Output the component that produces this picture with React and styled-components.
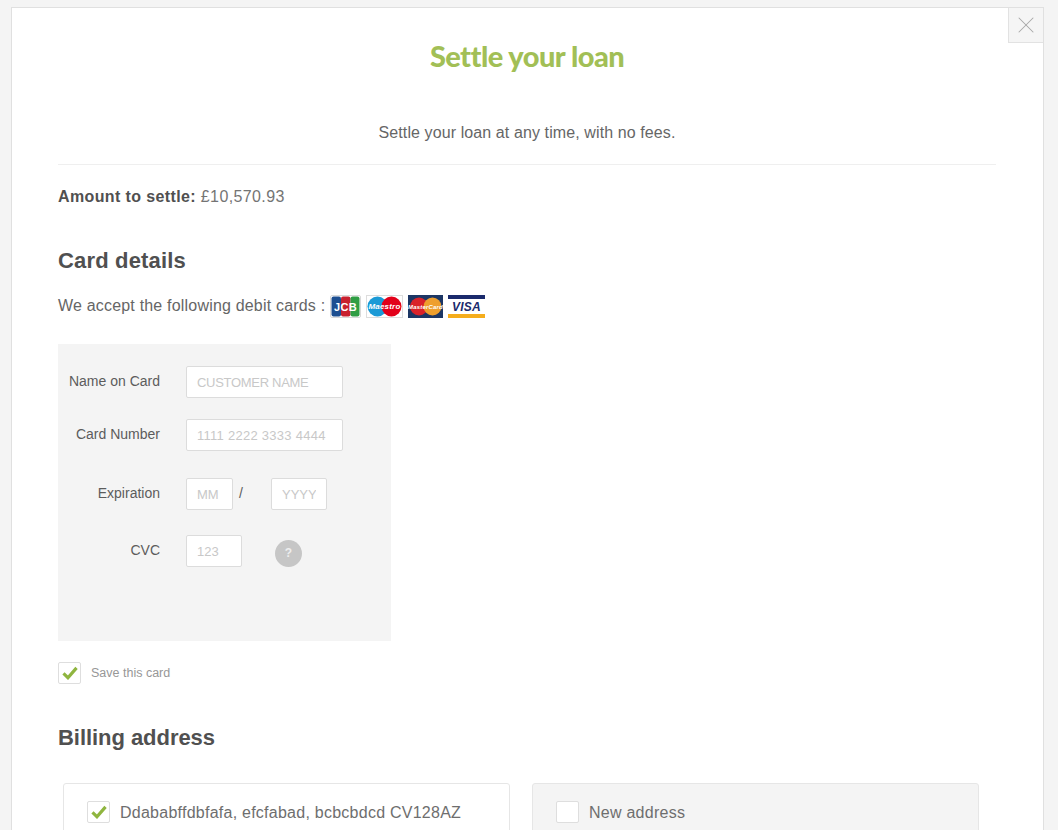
import React from 'react';
import styled, { createGlobalStyle } from 'styled-components';
import { X } from 'lucide-react';

const GlobalStyle = createGlobalStyle`
  html, body {
    margin: 0;
    padding: 0;
    height: 100%;
    overflow: hidden;
    background: #f4f4f4;
  }
  * {
    box-sizing: border-box;
  }
`;

const Page = styled.div`
  height: 830px;
  padding: 7px 14px 0 11px;
  overflow: hidden;
  font-family: 'Liberation Sans', Arial, sans-serif;
  color: #5c5c5c;
`;

const Modal = styled.div`
  position: relative;
  height: 860px;
  padding: 0 47px 0 46px;
  background: #fff;
  border: 1px solid #e0e0e0;
`;

const CloseBox = styled.button`
  position: absolute;
  top: 0;
  right: 0;
  width: 35px;
  height: 35px;
  padding: 0;
  display: flex;
  align-items: center;
  justify-content: center;
  color: #a8a8a8;
  background: #f5f5f5;
  border: none;
  border-left: 1px solid #e2e2e2;
  border-bottom: 1px solid #e2e2e2;
`;

const Title = styled.h1`
  margin: 0;
  padding-top: 30px;
  height: 87px;
  font-family: Lato, sans-serif;
  font-size: 29px;
  line-height: 36px;
  font-weight: 900;
  letter-spacing: -0.55px;
  text-align: center;
  color: #a2bf56;
`;

const Intro = styled.p`
  margin: 0;
  height: 70px;
  padding-top: 28px;
  border-bottom: 1px solid #efefef;
  font-size: 16px;
  line-height: 20px;
  letter-spacing: 0.1px;
  text-align: center;
  color: #666;
`;

const Amount = styled.p`
  margin: 0;
  padding-top: 22px;
  font-size: 16px;
  line-height: 20px;
  letter-spacing: 0.38px;
  color: #747474;
  strong {
    color: #505050;
  }
`;

const SectionTitle = styled.h2`
  margin: 0;
  padding-top: ${(p) => p.$top}px;
  font-size: 22px;
  line-height: 26px;
  font-weight: 700;
  letter-spacing: ${(p) => p.$track}px;
  color: #505050;
`;

const AcceptRow = styled.div`
  display: flex;
  align-items: center;
  height: 26px;
  margin-top: 19px;
  font-size: 16px;
  letter-spacing: 0.19px;
  color: #666;
`;

const Cards = styled.div`
  display: flex;
  gap: 5px;
  margin-left: 5px;
`;

const CardIcon = styled.svg`
  display: block;
  width: ${(p) => p.$width}px;
  height: 23px;
`;

const FormPanel = styled.div`
  width: 333px;
  height: 297px;
  margin-top: 25px;
  padding-top: 22px;
  background: #f4f4f4;
`;

const FormRow = styled.div`
  display: flex;
  align-items: center;
  height: 32px;
  margin-bottom: ${(p) => p.$gap}px;
`;

const Label = styled.label`
  flex: none;
  width: 102px;
  margin-right: 26px;
  padding-bottom: 3px;
  font-size: 14px;
  text-align: right;
  color: #5c5c5c;
`;

const Field = styled.input`
  flex: none;
  width: ${(p) => p.$width}px;
  height: 32px;
  padding: 0 10px;
  font-family: inherit;
  font-size: 13px;
  letter-spacing: ${(p) => p.$track || 0}px;
  background: #fff;
  border: 1px solid #dcdcdc;
  border-radius: 2px;
  outline: none;
  &::placeholder {
    color: #c8c8c8;
    opacity: 1;
  }
`;

const Slash = styled.span`
  width: 38px;
  padding-left: 6px;
  padding-bottom: 3px;
  font-size: 14px;
  color: #5c5c5c;
`;

const HelpDot = styled.span`
  width: 27px;
  height: 27px;
  margin-left: 33px;
  margin-top: 4px;
  display: flex;
  align-items: center;
  justify-content: center;
  border-radius: 50%;
  font-size: 12px;
  font-weight: 700;
  color: #eee;
  background: #c6c6c6;
`;

const SaveRow = styled.label`
  display: flex;
  align-items: center;
  gap: 10px;
  margin-top: 21px;
  font-size: 12.5px;
  color: #979797;
`;

const Box = styled.span`
  flex: none;
  width: 23px;
  height: 22px;
  display: flex;
  align-items: center;
  justify-content: center;
  background: #fff;
  border: 1px solid #dedede;
  border-radius: 2px;
`;

const AddressGrid = styled.div`
  display: grid;
  grid-template-columns: 447px 447px;
  column-gap: 22px;
  margin: 32px 0 0 5px;
`;

const AddressCard = styled.label`
  display: flex;
  align-items: flex-start;
  gap: 10px;
  height: 90px;
  padding: 17px 23px;
  font-size: 16px;
  line-height: 23px;
  letter-spacing: 0.25px;
  color: #6e6e6e;
  background: ${(p) => (p.$muted ? '#f4f4f4' : '#fff')};
  border: 1px solid #e6e6e6;
  border-radius: 3px;
`;

const Check = () => (
  <svg width="16" height="14" viewBox="0 0 17 15">
    <path d="M1.5 8 L6.3 12.6 L15.5 2" fill="none" stroke="#8fb53f" strokeWidth="3.4" />
  </svg>
);

const JcbCard = () => (
  <CardIcon $width={31} viewBox="0 0 31 23">
    <rect x="0.5" y="0.5" width="30" height="22" rx="1.5" fill="#fff" stroke="#d8d8d8" />
    <rect x="1.5" y="1.5" width="9.5" height="20" rx="2" fill="#1d4f91" />
    <rect x="11" y="1.5" width="9.5" height="20" rx="2" fill="#c8202f" />
    <rect x="20.5" y="1.5" width="9" height="20" rx="2" fill="#2f9e44" />
    <text x="15.5" y="15.5" textAnchor="middle" fontFamily="Liberation Sans" fontWeight="700" fontSize="11" letterSpacing="0.4" fill="#fff">JCB</text>
  </CardIcon>
);

const MaestroCard = () => (
  <CardIcon $width={37} viewBox="0 0 37 23">
    <rect x="0.5" y="0.5" width="36" height="22" fill="#fff" stroke="#ddd" />
    <circle cx="11.5" cy="11.5" r="10" fill="#1b9ad6" />
    <circle cx="25.5" cy="11.5" r="10" fill="#e2001a" />
    <text x="18.5" y="14" textAnchor="middle" fontFamily="Liberation Sans" fontStyle="italic" fontWeight="700" fontSize="8" fill="#fff">Maestro</text>
  </CardIcon>
);

const MasterCard = () => (
  <CardIcon $width={35} viewBox="0 0 35 23">
    <rect width="35" height="23" fill="#1c3664" />
    <circle cx="11" cy="11.5" r="9" fill="#d9222a" />
    <circle cx="24.5" cy="11.5" r="9" fill="#ee9f2d" />
    <text x="17.5" y="13.5" textAnchor="middle" fontFamily="Liberation Sans" fontStyle="italic" fontWeight="700" fontSize="6" fill="#fff">MasterCard</text>
  </CardIcon>
);

const VisaCard = () => (
  <CardIcon $width={37} viewBox="0 0 37 23">
    <rect width="37" height="23" fill="#fff" />
    <rect width="37" height="4" fill="#1a2a6c" />
    <rect y="19" width="37" height="4" fill="#f5ad1c" />
    <text x="18.5" y="16" textAnchor="middle" fontFamily="Liberation Sans" fontStyle="italic" fontWeight="700" fontSize="12" fill="#1a2a6c">VISA</text>
  </CardIcon>
);

export default function App() {
  return (
    <Page>
      <GlobalStyle />
      <Modal>
        <CloseBox aria-label="Close">
          <X size={28} strokeWidth={0.9} />
        </CloseBox>
        <Title>Settle your loan</Title>
        <Intro>Settle your loan at any time, with no fees.</Intro>
        <Amount>
          <strong>Amount to settle:</strong> £10,570.93
        </Amount>
        <SectionTitle $top={41} $track={0.17}>Card details</SectionTitle>
        <AcceptRow>
          We accept the following debit cards :
          <Cards>
            <JcbCard />
            <MaestroCard />
            <MasterCard />
            <VisaCard />
          </Cards>
        </AcceptRow>
        <FormPanel>
          <FormRow $gap={21}>
            <Label>Name on Card</Label>
            <Field $width={157} $track={-0.3} placeholder="CUSTOMER NAME" />
          </FormRow>
          <FormRow $gap={27}>
            <Label>Card Number</Label>
            <Field $width={157} $track={0.27} placeholder="1111 2222 3333 4444" />
          </FormRow>
          <FormRow $gap={25}>
            <Label>Expiration</Label>
            <Field $width={47} placeholder="MM" />
            <Slash>/</Slash>
            <Field $width={56} placeholder="YYYY" />
          </FormRow>
          <FormRow $gap={0}>
            <Label>CVC</Label>
            <Field $width={56} placeholder="123" />
            <HelpDot>?</HelpDot>
          </FormRow>
        </FormPanel>
        <SaveRow>
          <Box>
            <Check />
          </Box>
          Save this card
        </SaveRow>
        <SectionTitle $top={41} $track={-0.05}>Billing address</SectionTitle>
        <AddressGrid>
          <AddressCard>
            <Box>
              <Check />
            </Box>
            Ddababffdbfafa, efcfabad, bcbcbdcd CV128AZ
          </AddressCard>
          <AddressCard $muted>
            <Box />
            New address
          </AddressCard>
        </AddressGrid>
      </Modal>
    </Page>
  );
}
